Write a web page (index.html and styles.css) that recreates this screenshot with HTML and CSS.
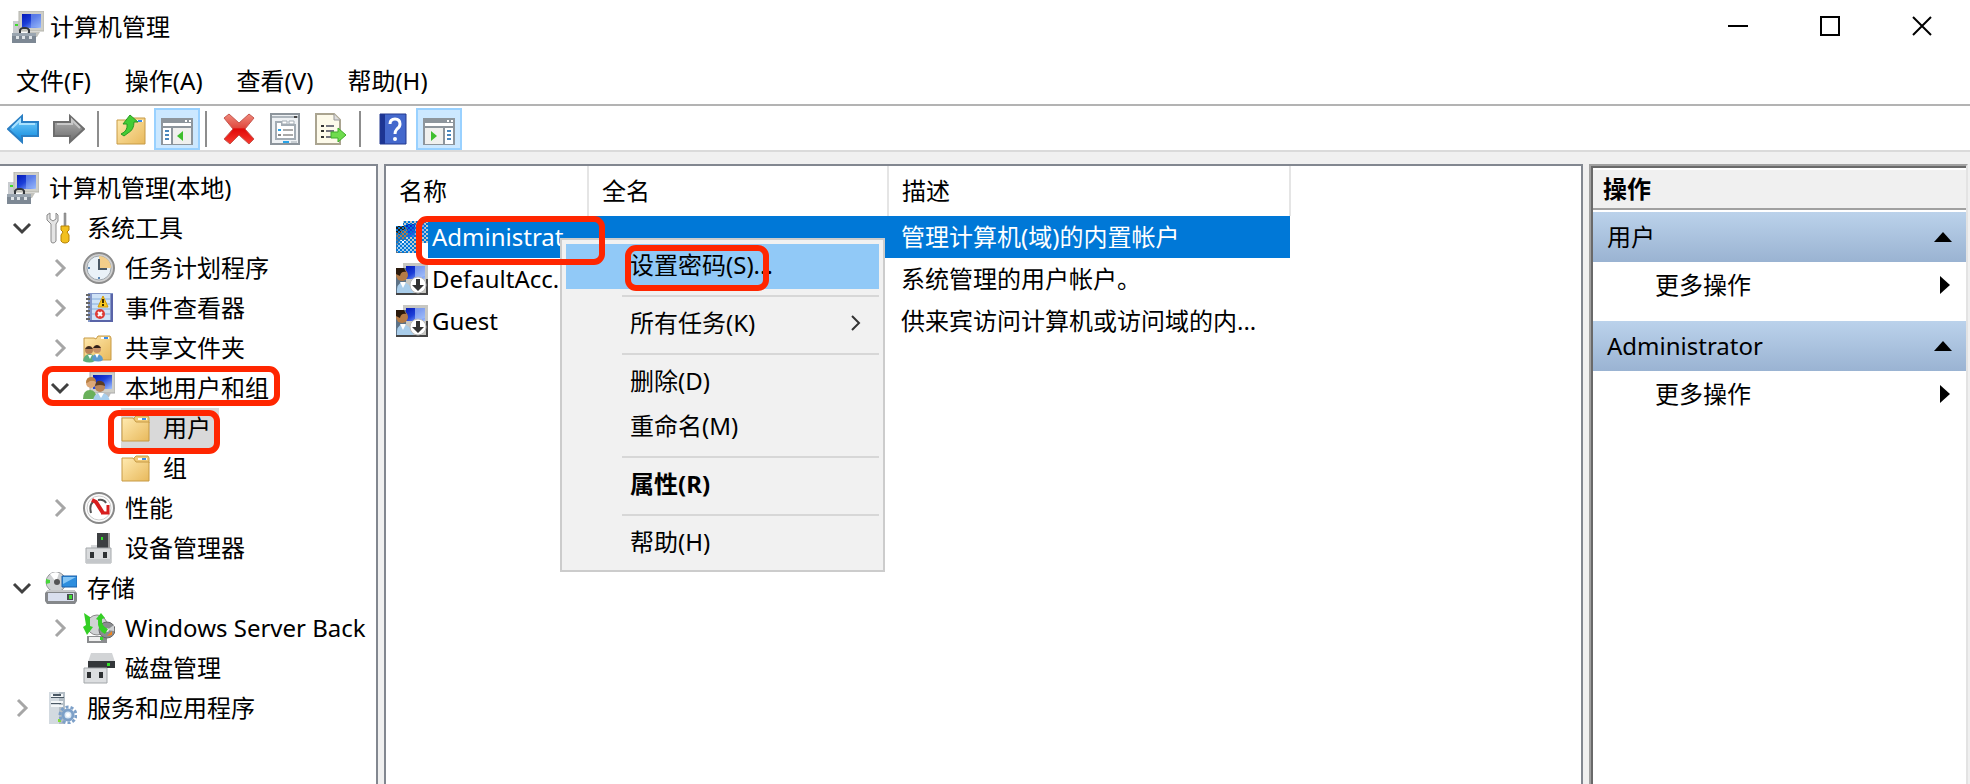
FILE: index.html
```html
<!DOCTYPE html>
<html lang="zh-CN">
<head>
<meta charset="UTF-8">
<title>计算机管理</title>
<link rel="stylesheet" href="styles.css">
</head>

<body>

<!-- shared icons -->
<svg class="defs" aria-hidden="true">
  <defs>
    <linearGradient id="gBlue" x1="0" y1="0" x2="1" y2="1"><stop offset="0" stop-color="#0418b8"/><stop offset=".45" stop-color="#1c3fd8"/><stop offset="1" stop-color="#a4c4ff"/></linearGradient>
    <linearGradient id="gFolder" x1="0" y1="0" x2="1" y2="1"><stop offset="0" stop-color="#ffeab0"/><stop offset="1" stop-color="#e8b95c"/></linearGradient>
    <linearGradient id="gArrow" x1="0" y1="0" x2="0" y2="1"><stop offset="0" stop-color="#7fd4ff"/><stop offset="1" stop-color="#0a86dc"/></linearGradient>
    <linearGradient id="gGray" x1="0" y1="0" x2="0" y2="1"><stop offset="0" stop-color="#b5b5b5"/><stop offset="1" stop-color="#6c6c6c"/></linearGradient>
    <linearGradient id="gRed" x1="0" y1="0" x2="0" y2="1"><stop offset="0" stop-color="#f08a7c"/><stop offset=".45" stop-color="#e04a40"/><stop offset=".5" stop-color="#e00808"/><stop offset="1" stop-color="#f83c30"/></linearGradient>
    <pattern id="dither" width="4" height="4" patternUnits="userSpaceOnUse"><rect width="2" height="2" fill="#0078d7"/><rect x="2" y="2" width="2" height="2" fill="#0078d7"/></pattern>
  </defs>

  <symbol id="i-computer" viewBox="0 0 32 32">
    <path d="M1 10h6v14H1z" fill="#c9ccd0"/><path d="M3 13h3v2H3z" fill="#3ddc2a"/>
    <path d="M7 0h25v20H7z" fill="#cfcfc8"/><path d="M7 0h25v20H7z" fill="none" stroke="#b3b3ab"/>
    <path d="M10 3h19v14H10z" fill="url(#gBlue)"/><path d="M19 3h10v12l-10 2z" fill="#8fb0f6" opacity=".55"/>
    <path d="M15 21h13l-3 5h-8z" fill="#c3c3bd"/>
    <path d="M8 22v-3q1-2 3-2h3q2 0 3 2v3" fill="none" stroke="#33373c" stroke-width="2"/>
    <path d="M0 22h24v10H0z" fill="#7d8894"/><path d="M0 22h24v3H0z" fill="#9aa5b0"/>
    <path d="M4 25h3v3H4zM10 25h3v3h-3zM17 25h3v3h-3z" fill="#dfe4e8"/>
  </symbol>

  <symbol id="i-tools" viewBox="-1 0 32 32">
    <path d="M4 1v6l3 2 3-2V1l2 2v6l-2 3v17q-1 2-3 2t-2-2V12L1 8V3z" fill="#e4e4e4" stroke="#8a8a8a"/>
    <path d="M18 1h2v14h-2z" fill="#9b9b9b" stroke="#777" stroke-width=".5"/>
    <path d="M15 14h8v4l-2 2 2 3v6q-1 2-4 2t-4-2v-6l2-3-2-2z" fill="#f2c01e" stroke="#b58105"/>
  </symbol>

  <symbol id="i-clock" viewBox="0 0 32 32">
    <circle cx="16" cy="16" r="15" fill="#d0d0d0" stroke="#8c8c8c" stroke-width="2"/>
    <circle cx="16" cy="16" r="12" fill="#eaf2f8" stroke="#a0a8ae"/>
    <path d="M16 16V4a12 12 0 0 1 12 12z" fill="#f3ce8a"/>
    <path d="M16 7v10h8" fill="none" stroke="#4c5a66" stroke-width="2"/>
    <path d="M16 25v2M5 16h2" stroke="#5b87b4" stroke-width="2"/>
  </symbol>

  <symbol id="i-event" viewBox="0 0 32 32">
    <path d="M5 1h25v29H5z" fill="#8497c8"/><path d="M9 2h18v26H9z" fill="#cfe2f6"/>
    <path d="M9 7h18M9 12h18M9 17h18M9 22h18" stroke="#86aedb"/>
    <path d="M29 2v27H7" fill="none" stroke="#5964a8" stroke-width="2"/>
    <path d="M3 3h4M3 7h4M3 11h4M3 15h4M3 19h4M3 23h4M3 27h4" stroke="#666" stroke-width="2"/>
    <path d="M20 4l5 11H15z" fill="#f8c920" stroke="#d49a0a"/><path d="M20 7v4M20 12v2" stroke="#3a2c00" stroke-width="2"/>
    <circle cx="17" cy="22" r="5" fill="#dd3b35"/><path d="M15 20l4 4M19 20l-4 4" stroke="#fff" stroke-width="2"/>
  </symbol>

  <symbol id="i-folder" viewBox="1 -3 32 32">
    <path d="M14 3l2-2h12l1 2v5H14z" fill="#f0ca78" stroke="#c79a45"/><path d="M18 3h9v2h-9z" fill="#fff"/><path d="M22 3h4v2h-4z" fill="#3b8ce8"/>
    <path d="M2 3h11l3 4h13v19H2z" fill="url(#gFolder)" stroke="#c79a45"/>
  </symbol>

  <symbol id="i-shared" viewBox="0 -3 32 32">
    <path d="M13 4l2-3h12l1 2v22H1V3h10z" fill="url(#gFolder)" stroke="#c79a45"/><path d="M18 2h8v2h-8z" fill="#fff"/><path d="M21 2h4v2h-4z" fill="#3b8ce8"/>
    <circle cx="6" cy="15" r="4" fill="#b98357"/><path d="M2 14q4-6 8 0z" fill="#3d2c20"/>
    <circle cx="14" cy="14" r="4" fill="#c79267"/><path d="M10 13q4-6 8 0z" fill="#2d2018"/>
    <path d="M0 26q1-7 7-7 5 1 5 7-5 3-12 0z" fill="#5fae7d"/><path d="M9 25q0-6 5-6 6 1 6 6-4 3-11 0z" fill="#5b9bd0"/><path d="M5 20l2 4 2-4M12 19l2 4 2-4" fill="#fff"/>
  </symbol>

  <symbol id="i-users" viewBox="0 0 32 32">
    <path d="M7 0h25v21H7z" fill="#cfcfc8" stroke="#aaa"/><path d="M10 3h19v14H10z" fill="url(#gBlue)"/>
    <path d="M14 21h14l-2 4h-9z" fill="#bbb"/>
    <circle cx="8" cy="11" r="5" fill="#dba878"/><path d="M3 11q0-6 5-6t5 5q-3-2-6-1-2 2-4 2z" fill="#b98043"/>
    <circle cx="17" cy="15" r="5" fill="#b8855b"/><path d="M12 14q1-6 6-5 4 1 4 5-5-2-10 0z" fill="#5d3c22"/>
    <path d="M0 27q0-9 7-9 6 0 7 9z" fill="#69b05b"/><path d="M10 30q0-9 8-9t9 9z" fill="#a8cfee"/><path d="M15 21l3 5 3-5z" fill="#fff"/>
  </symbol>

  <symbol id="i-perf" viewBox="0 0 32 32">
    <circle cx="16" cy="16" r="15" fill="#fafafa" stroke="#888" stroke-width="2"/>
    <circle cx="16" cy="16" r="12" fill="#fff" stroke="#ccc"/>
    <path d="M8 21q-2-8 2-11M15 8q6-1 8 3" fill="none" stroke="#555" stroke-width="2"/>
    <path d="M9 8l4 2 7 11" fill="none" stroke="#d81e1e" stroke-width="4"/><path d="M25 13v8h-7" fill="none" stroke="#d81e1e" stroke-width="3"/>
  </symbol>

  <symbol id="i-device" viewBox="0 0 32 32">
    <path d="M14 1h11v15H14z" fill="#3c3f42"/><path d="M25 1h2v15h-2z" fill="#999"/><path d="M18 5h2v3h-2z" fill="#35e02a"/>
    <path d="M8 13h6v4H8z" fill="#d8dadc"/>
    <path d="M3 16h25v15H3z" fill="#d9dbdd" stroke="#a3a7aa"/><path d="M3 27h25v4H3z" fill="#c4c7ca"/>
    <path d="M7 20h4v6H7zM20 20h4v6h-4z" fill="#2e3133"/>
  </symbol>

  <symbol id="i-storage" viewBox="0 0 32 32">
    <circle cx="11" cy="10" r="10" fill="#cfd1d3" stroke="#97999b"/><path d="M11 10L5 2a10 10 0 0 1 9-1z" fill="#fff"/><path d="M1 7l4 1v3l-4 1z" fill="#47d63a"/><circle cx="12" cy="10" r="3" fill="#555"/>
    <path d="M17 4h15v11H17z" fill="#2e8ede" stroke="#1a5fa8"/><path d="M18 5h13L18 12z" fill="#86c6f5"/>
    <path d="M3 18h26l3 3v8l-2 3H2l-2-3v-8z" fill="#85888b"/><path d="M3 18h26l2 2H1z" fill="#c7c9cb"/>
    <path d="M3 21h26v8H3z" fill="#d9dfee"/><path d="M22 22h6v6h-6z" fill="#4a4d50"/><path d="M24 23h3v4h-3z" fill="#3fdc32"/>
  </symbol>

  <symbol id="i-backup" viewBox="0 0 32 32">
    <circle cx="14" cy="13" r="10" fill="#d0d2d4" stroke="#888"/>
    <path d="M4 24h20v7H4z" fill="#8a8c8e"/><path d="M6 25h12v4H6z" fill="#f0f0f0"/><path d="M17 25h3v3h-3z" fill="#37d92c"/>
    <circle cx="24" cy="18" r="8" fill="#8b8d90" stroke="#666"/><path d="M24 18l7-5v6z" fill="#cfd1d3"/><path d="M24 24l5-5v4z" fill="#f0841e"/><circle cx="24" cy="18" r="2" fill="#eee"/>
    <path d="M1 1l6 4v9l3 1-6 8-4-8 3-2z" fill="#34cf25"/><path d="M13 7l5-6 4 5-3 1q-1 7 6 10l-3 5q-8-4-7-14z" fill="#34cf25"/>
  </symbol>

  <symbol id="i-disk" viewBox="0 0 32 32">
    <path d="M8 1h21l3 9H5z" fill="#d2d4d6"/><path d="M5 9h27v7H5z" fill="#34373a"/><path d="M24 11h3v3h-3z" fill="#35e02a"/>
    <path d="M1 16h23v15H1z" fill="#dcdee0" stroke="#a3a7aa"/><path d="M4 20h4v6H4zM16 20h4v6h-4z" fill="#2e3133"/>
  </symbol>

  <symbol id="i-services" viewBox="0 0 32 32">
    <path d="M4 0h16v32H4z" fill="#b4bec6"/><path d="M4 0h10v32H4z" fill="#d3dae0"/><path d="M6 2h12v3H6zM6 9h12v2H6zM6 13h12v2H6z" fill="#f3f6f8"/>
    <path d="M8 2h8v2H8zM6 11h10v1H6zM6 5h13v1H6z" fill="#4a5864"/><path d="M13 27h3v3h-3z" fill="#83dc34"/>
    <circle cx="23" cy="23" r="8" fill="none" stroke="#7da0c8" stroke-width="3" stroke-dasharray="3 2"/>
    <circle cx="23" cy="23" r="5" fill="#dce9f6" stroke="#7da0c8" stroke-width="3"/><circle cx="23" cy="23" r="2" fill="#fff"/>
  </symbol>

  <symbol id="i-user" viewBox="0 0 32 32">
    <path d="M7 0h25v32H7z" fill="#c7c7c2"/><path d="M10 3h19v13H10z" fill="url(#gBlue)"/><path d="M19 3h10v10l-10 3z" fill="#a8c4fa" opacity=".7"/>
    <path d="M0 5h10v27H0z" fill="#5d7286"/>
    <circle cx="6" cy="12" r="6" fill="#b57b45"/><path d="M0 11V5h8l2 4q-5-1-6 4z" fill="#2b1a0c"/>
    <path d="M1 31q-1-11 6-12 8 1 11 12z" fill="#a9cdea"/><path d="M4 19l3 6 3-6z" fill="#fff"/>
  </symbol>

  <symbol id="i-user-off" viewBox="0 0 32 32">
    <use href="#i-user"/>
    <path d="M0 30h32v2H0zM30 16h2v16h-2z" fill="#444"/>
    <circle cx="22" cy="22" r="8" fill="#fff" stroke="#bbb"/><path d="M20 16h4v6h4l-6 6-6-6h4z" fill="#333"/>
  </symbol>
</svg>

<header class="titlebar">
  <svg class="ico"><use href="#i-computer"/></svg>
  <h1 class="title">计算机管理</h1>
  <div class="winButtons">
    <button class="winBtn" aria-label="最小化"><svg viewBox="0 0 20 20"><path d="M0 9h20v2H0z"/></svg></button>
    <button class="winBtn" aria-label="最大化"><svg viewBox="0 0 20 20"><path d="M1 1h18v18H1z" fill="none" stroke="#000" stroke-width="2"/></svg></button>
    <button class="winBtn" aria-label="关闭"><svg viewBox="0 0 20 20"><path d="M1 1l18 18M19 1L1 19" stroke="#000" stroke-width="2"/></svg></button>
  </div>
</header>

<nav class="menubar">
  <button>文件(F)</button>
  <button>操作(A)</button>
  <button>查看(V)</button>
  <button>帮助(H)</button>
</nav>

<div class="toolbar">
  <button class="tool" aria-label="后退"><svg class="ico" viewBox="0 0 32 32"><path d="M1 16L15 3v6h16v14H15v6z" fill="url(#gArrow)" stroke="#2a7fc4" stroke-width="2"/><path d="M5 15l8-8v4h15" fill="none" stroke="#a9e2ff" stroke-width="2"/></svg></button>
  <button class="tool" aria-label="前进"><svg class="ico" viewBox="0 0 32 32"><path d="M31 16L17 3v6H1v14h16v6z" fill="url(#gGray)" stroke="#6e6e6e" stroke-width="2"/><path d="M4 11h15V7l8 8" fill="none" stroke="#c8c8c8" stroke-width="2"/></svg></button>
  <span class="sep"></span>
  <button class="tool" aria-label="上一级"><svg class="ico" viewBox="0 -1 32 32"><path d="M2 6h12l4 2V4h12v26H2z" fill="url(#gFolder)" stroke="#c79a45"/><path d="M20 6h8v2h-8z" fill="#fff"/><path d="M23 6h4v2h-4z" fill="#3b8ce8"/><path d="M6 20q7-3 6-10H8l7-9 8 7h-4q0 8-6 11l-4 3z" fill="#43cc35" stroke="#2a9a22"/></svg></button>
  <button class="tool on" aria-label="显示/隐藏控制台树"><svg class="ico" viewBox="0 -2 32 32"><path d="M1 4h30v26H1z" fill="#fff" stroke="#8d959c" stroke-width="2"/><path d="M1 4h30v4H1z" fill="#8d959c"/><path d="M24 5h2v2h-2zM28 5h2v2h-2z" fill="#fff"/><path d="M1 12h30M11 12v18" stroke="#8d959c" stroke-width="2"/><path d="M4 16h4M4 20h4M4 24h4" stroke="#4a87bd" stroke-width="2"/><path d="M12 13h18v16H12z" fill="#f0f0ee"/><path d="M22 16v10l-6-5z" fill="#3fbf2e"/></svg></button>
  <span class="sep"></span>
  <button class="tool" aria-label="删除"><svg class="ico" viewBox="0 0 32 32"><path d="M1 5l5-4 10 9L26 1l5 4-9 11 9 10-5 5-10-9-9 9-6-5 9-10z" fill="url(#gRed)" stroke="#c4564e"/></svg></button>
  <button class="tool" aria-label="属性"><svg class="ico" viewBox="0 0 32 32"><path d="M2 1h28v30H2z" fill="#eef1f4" stroke="#8d959c" stroke-width="2"/><path d="M3 4h26" stroke="#aeb6bd" stroke-width="2"/><path d="M25 3h3v2h-3z" fill="#444"/><path d="M7 9h6v3h13v14H7z" fill="#fff" stroke="#a3acb4" stroke-width="2"/><path d="M13 8h5v3h-5zM20 8h5v3h-5z" fill="#fff" stroke="#a3acb4"/><path d="M9 16h3v2H9z" fill="#29a3e8"/><path d="M9 21h3v2H9z" fill="#888"/><path d="M14 17h10M14 22h10" stroke="#aaa" stroke-width="2"/><path d="M14 28h6v2h-6z" fill="#29a3e8"/><path d="M22 28h6v2h-6z" fill="#c8ced3"/></svg></button>
  <button class="tool" aria-label="导出列表"><svg class="ico" viewBox="0 0 32 32"><path d="M1 1h18l6 6v24H1z" fill="#fdfaea" stroke="#aaa490" stroke-width="2"/><path d="M19 1v6h6" fill="#ddd" stroke="#999"/><path d="M6 12h3v2H6zM6 17h3v2H6zM6 23h3v2H6z" fill="#333"/><path d="M11 13h8M11 18h8M11 24h8" stroke="#75757f" stroke-width="2"/><path d="M16 19h7v-4l8 7-8 7v-4h-7z" fill="#6fdc4e" stroke="#3fae2a"/></svg></button>
  <span class="sep"></span>
  <button class="tool" aria-label="帮助"><svg class="ico" viewBox="0 0 32 32"><path d="M3 1h26v30H3z" fill="#4468cc"/><path d="M3 1h5v30H3z" fill="#1d3593"/><path d="M3 1h26v30H3z" fill="none" stroke="#22388f"/><path d="M13 11q0-5 5-5t5 5q0 3-3 5-2 2-2 5" fill="none" stroke="#fff" stroke-width="3"/><circle cx="18" cy="26" r="2" fill="#fff"/></svg></button>
  <button class="tool on" aria-label="显示/隐藏操作窗格"><svg class="ico" viewBox="0 -2 32 32"><path d="M1 4h30v26H1z" fill="#fff" stroke="#8d959c" stroke-width="2"/><path d="M1 4h30v4H1z" fill="#8d959c"/><path d="M24 5h2v2h-2zM28 5h2v2h-2z" fill="#fff"/><path d="M2 13h18v16H2z" fill="#f0f0ee"/><path d="M1 12h30M21 12v18" stroke="#8d959c" stroke-width="2"/><path d="M24 16h4M24 20h4M24 24h4" stroke="#4a87bd" stroke-width="2"/><path d="M8 16v10l6-5z" fill="#3fbf2e"/></svg></button>
</div>

<main class="panes">

  <ul class="tree">
    <li class="node l0"><svg class="ico"><use href="#i-computer"/></svg><span>计算机管理(本地)</span></li>
    <li class="node l1 open"><svg class="chev" viewBox="0 0 20 20"><path d="M2 6l8 8 8-8"/></svg><svg class="ico"><use href="#i-tools"/></svg><span>系统工具</span></li>
    <li class="node l2"><svg class="chev" viewBox="0 0 20 20"><path d="M6 2l8 8-8 8"/></svg><svg class="ico"><use href="#i-clock"/></svg><span>任务计划程序</span></li>
    <li class="node l2"><svg class="chev" viewBox="0 0 20 20"><path d="M6 2l8 8-8 8"/></svg><svg class="ico"><use href="#i-event"/></svg><span>事件查看器</span></li>
    <li class="node l2"><svg class="chev" viewBox="0 0 20 20"><path d="M6 2l8 8-8 8"/></svg><svg class="ico"><use href="#i-shared"/></svg><span>共享文件夹</span></li>
    <li class="node l2 open"><svg class="chev" viewBox="0 0 20 20"><path d="M2 6l8 8 8-8"/></svg><svg class="ico"><use href="#i-users"/></svg><span>本地用户和组</span><i class="mark markGroup"></i></li>
    <li class="node l3"><div class="current"><svg class="ico"><use href="#i-folder"/></svg><span>用户</span></div><i class="mark markUsers"></i></li>
    <li class="node l3"><svg class="ico"><use href="#i-folder"/></svg><span>组</span></li>
    <li class="node l2"><svg class="chev" viewBox="0 0 20 20"><path d="M6 2l8 8-8 8"/></svg><svg class="ico"><use href="#i-perf"/></svg><span>性能</span></li>
    <li class="node l2 leaf"><svg class="ico"><use href="#i-device"/></svg><span>设备管理器</span></li>
    <li class="node l1 open"><svg class="chev" viewBox="0 0 20 20"><path d="M2 6l8 8 8-8"/></svg><svg class="ico"><use href="#i-storage"/></svg><span>存储</span></li>
    <li class="node l2"><svg class="chev" viewBox="0 0 20 20"><path d="M6 2l8 8-8 8"/></svg><svg class="ico"><use href="#i-backup"/></svg><span>Windows Server Back</span></li>
    <li class="node l2 leaf"><svg class="ico"><use href="#i-disk"/></svg><span>磁盘管理</span></li>
    <li class="node l1"><svg class="chev" viewBox="0 0 20 20"><path d="M6 2l8 8-8 8"/></svg><svg class="ico"><use href="#i-services"/></svg><span>服务和应用程序</span></li>
  </ul>

  <section class="list">
    <table class="users">
      <colgroup><col class="cName"><col class="cFull"><col class="cDesc"></colgroup>
      <thead>
        <tr><th>名称</th><th>全名</th><th>描述</th></tr>
      </thead>
      <tbody>
        <tr class="selected">
          <td class="name"><div class="nameCell"><svg class="ico" viewBox="0 0 32 32"><use href="#i-user"/><path d="M0 5h7V0h25v32H0z" fill="url(#dither)"/><path d="M26 22h6v10h-6z" fill="#fff"/></svg><span>Administrat</span></div></td>
          <td></td>
          <td>管理计算机(域)的内置帐户</td>
        </tr>
        <tr>
          <td class="name"><div class="nameCell"><svg class="ico"><use href="#i-user-off"/></svg><span>DefaultAcc...</span></div></td>
          <td></td>
          <td>系统管理的用户帐户。</td>
        </tr>
        <tr>
          <td class="name"><div class="nameCell"><svg class="ico"><use href="#i-user-off"/></svg><span>Guest</span></div></td>
          <td></td>
          <td>供来宾访问计算机或访问域的内...</td>
        </tr>
      </tbody>
    </table>

    <div class="contextMenu">
      <button class="active">设置密码(S)...</button>
      <hr>
      <button>所有任务(K)<svg class="sub" viewBox="0 0 20 20"><path d="M6 3l7 7-7 7"/></svg></button>
      <hr>
      <button>删除(D)</button>
      <button>重命名(M)</button>
      <hr>
      <button class="default">属性(R)</button>
      <hr>
      <button>帮助(H)</button>
    </div>

    <i class="mark markAdmin"></i>
    <i class="mark markPassword"></i>
  </section>

  <aside class="actions">
    <div class="actionsInner">
      <h2 class="actionsTitle">操作</h2>
      <button class="group">用户<svg class="tri" viewBox="0 0 20 20"><path d="M1 15L10 5l9 10z"/></svg></button>
      <button class="more">更多操作<svg class="tri" viewBox="0 0 20 20"><path d="M7 1l10 9-10 9z"/></svg></button>
      <button class="group">Administrator<svg class="tri" viewBox="0 0 20 20"><path d="M1 15L10 5l9 10z"/></svg></button>
      <button class="more">更多操作<svg class="tri" viewBox="0 0 20 20"><path d="M7 1l10 9-10 9z"/></svg></button>
    </div>
  </aside>

</main>

</body>
</html>
```
FILE: styles.css
```css
*{
  box-sizing:border-box;
}

body{
  margin:0;
  height:100vh;
  display:flex;
  flex-direction:column;
  overflow:hidden;
  background:#fff;
  color:#000;
  font-family:"Noto Sans", "Noto Sans CJK SC", sans-serif;
  font-size:24px;
  line-height:40px;
}

button{
  margin:0;
  padding:0;
  border:none;
  background:none;
  color:inherit;
  font:inherit;
  text-align:left;
}

.defs{
  position:absolute;
  width:0;
  height:0;
}

.ico{
  width:32px;
  height:32px;
  flex:none;
}

/* title bar */
.titlebar{
  display:flex;
  align-items:center;
  height:54px;
  padding:0 2px 0 12px;
  gap:6px;
}

.title{
  flex:1;
  margin:0;
  font-size:24px;
  font-weight:normal;
}

.winButtons{
  display:flex;
  align-self:flex-start;
}

.winBtn{
  width:92px;
  height:52px;
  display:flex;
  align-items:center;
  justify-content:center;
}

.winBtn svg{
  width:20px;
  height:20px;
}

/* menu bar */
.menubar{
  display:flex;
  gap:34px;
  height:50px;
  padding:7px 16px;
}

/* toolbar */
.toolbar{
  display:flex;
  align-items:center;
  height:48px;
  padding-top:2px;
  border-top:2px solid #b3b3b3;
  border-bottom:2px solid #dadada;
}

.tool{
  display:flex;
  align-items:center;
  justify-content:center;
  width:46px;
  height:42px;
}

.tool.on{
  background:#cce8ff;
  border:2px solid #99d1ff;
}

.sep{
  width:2px;
  height:36px;
  margin:0 9px 0 5px;
  background:#8d8d8d;
}

/* panes */
.panes{
  flex:1;
  min-height:0;
  display:flex;
  gap:6px;
  padding-top:12px;
  padding-right:2px;
  background:#f0f0f0;
}

.tree{
  flex:none;
  width:378px;
  margin:0;
  padding:2px 0;
  list-style:none;
  background:#fff;
  border-top:2px solid #828790;
  border-right:2px solid #828790;
  overflow:hidden;
}

.node{
  position:relative;
  display:flex;
  align-items:center;
  gap:10px;
  height:40px;
  white-space:nowrap;
}

.l0{ padding-left:7px; }
.l1{ padding-left:12px; }
.l2{ padding-left:50px; }
.l2.leaf{ padding-left:83px; }
.l3{ padding-left:121px; }

.chev{
  flex:none;
  width:20px;
  height:20px;
  margin-right:3px;
  fill:none;
  stroke:#a6a6a6;
  stroke-width:3;
}

.open .chev{
  stroke:#404040;
}

.current{
  display:flex;
  align-items:center;
  gap:10px;
  padding-right:8px;
  background:#d9d9d9;
}

.list{
  position:relative;
  flex:1;
  background:#fff;
  border:2px solid #828790;
  border-bottom:none;
}

.users{
  width:904px;
  table-layout:fixed;
  border-collapse:collapse;
}

.cName{ width:202px; }
.cFull{ width:300px; }
.cDesc{ width:402px; }

.users th{
  height:50px;
  padding:0 0 0 13px;
  border-right:2px solid #e5e5e5;
  font-weight:normal;
  text-align:left;
}

.users td{
  height:42px;
  padding:0 0 0 13px;
  white-space:nowrap;
}

.users .name{
  padding:0 0 0 10px;
}

.nameCell{
  display:flex;
  align-items:center;
}

.nameCell span{
  flex:1;
  height:42px;
  padding-left:4px;
  line-height:42px;
}

.selected{
  color:#fff;
}

.selected td + td,
.selected .nameCell span{
  background:#0078d7;
}

/* context menu */
.contextMenu{
  position:absolute;
  left:174px;
  top:72px;
  width:325px;
  padding:4px;
  background:#f1f1f1;
  border:2px solid #ccc;
}

.contextMenu button{
  display:flex;
  align-items:center;
  width:100%;
  height:45px;
  padding:0 0 3px 64px;
}

.contextMenu .active{
  background:#91c9f7;
}

.contextMenu .default{
  font-weight:bold;
}

.contextMenu hr{
  height:2px;
  margin:6px 0 5px 56px;
  border:none;
  background:#d7d7d7;
}

.sub{
  width:20px;
  height:20px;
  margin-left:auto;
  margin-right:13px;
  fill:none;
  stroke:#333;
  stroke-width:2;
}

/* red highlight frames */
.mark{
  position:absolute;
  border:6px solid #ff2600;
  border-radius:11px;
}

.markGroup{ left:42px; top:-2px; width:238px; height:40px; }
.markUsers{ left:108px; top:2px; width:112px; height:44px; }
.markAdmin{ left:30px; top:50px; width:189px; height:49px; }
.markPassword{ left:239px; top:79px; width:144px; height:46px; }

/* actions */
.actions{
  flex:none;
  width:379px;
  background:#fff;
  border:2px solid #a0a0a0;
  border-right-color:#e3e3e3;
  border-bottom:none;
}

.actionsInner{
  height:100%;
  border-top:2px solid #696969;
  border-left:2px solid #696969;
}

.actionsTitle{
  height:42px;
  margin:0 0 2px;
  padding-left:10px;
  background:#f0f0f0;
  border-top:2px solid #fff;
  border-bottom:2px solid #a0a0a0;
  font-size:24px;
  font-weight:bold;
  line-height:38px;
}

.actions button{
  display:flex;
  align-items:center;
  justify-content:space-between;
  width:100%;
  padding-right:13px;
}

.actions .group{
  height:50px;
  padding-left:14px;
  background:linear-gradient(#bbd2eb, #9ab3d2);
}

.actions .more{
  height:46px;
  margin-bottom:13px;
  padding-left:62px;
}

.tri{
  width:20px;
  height:20px;
}
```
